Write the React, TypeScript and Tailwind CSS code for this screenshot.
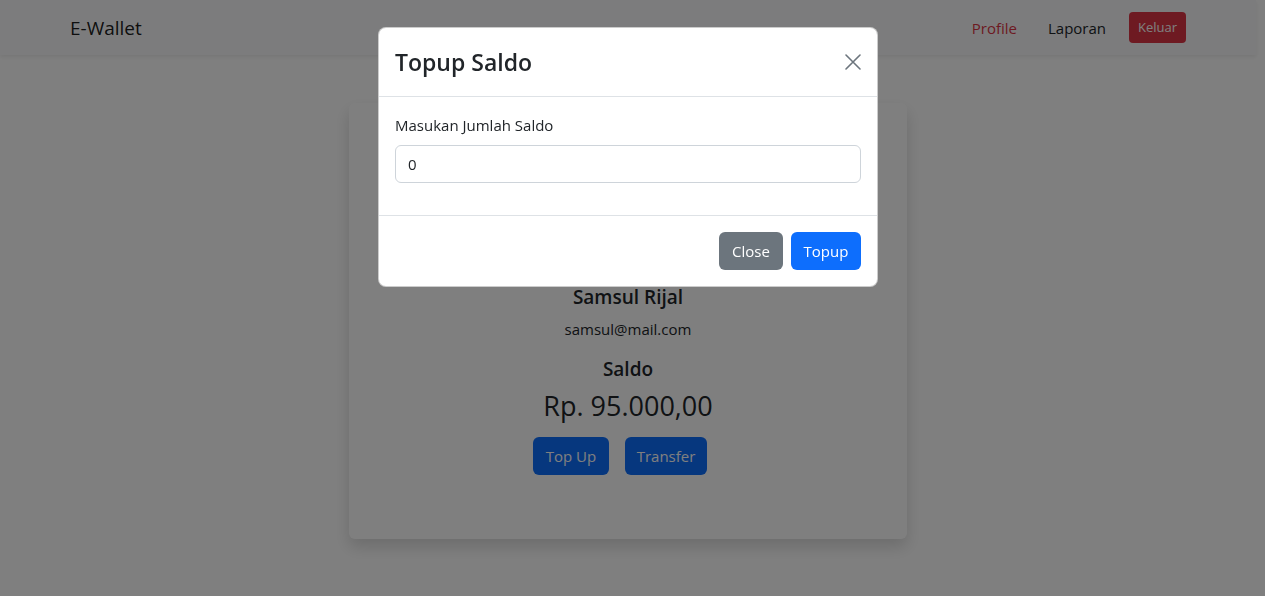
import React from "react";

export default function App() {
  return (
    <div className="relative min-h-[596px] bg-white font-['Open_Sans',sans-serif] text-[#212529]">
      <div className="pr-[9px]">
        <nav className="h-[55px] bg-[#f8f9fa] shadow-[0_2px_4px_rgba(0,0,0,0.075)]">
          <div className="mx-auto flex h-full max-w-[1140px] items-center justify-between px-3">
            <span className="text-[19px] leading-[30px] text-black/90">E-Wallet</span>
            <div className="flex items-center gap-[15px]">
              <a className="px-2 text-[15px] leading-6 text-[#dc3545]">Profile</a>
              <a className="px-2 text-[15px] leading-6 text-[#212529]">Laporan</a>
              <button className="h-[31px] w-[57px] rounded-[4px] bg-[#dc3545] text-[13px] text-white">Keluar</button>
            </div>
          </div>
        </nav>
        <main className="mx-auto max-w-[1140px] px-3">
          <div className="mx-auto mt-[48px] w-[558px] rounded-[6px] bg-white p-4 pb-[64px] text-center shadow-[0_8px_16px_rgba(0,0,0,0.15)]">
            <div className="h-[166px]" />
            <h5 className="mb-2 text-[19px] font-semibold leading-6">Samsul Rijal</h5>
            <p className="mb-4 text-[15px] leading-6">samsul@mail.com</p>
            <h5 className="mb-2 text-[19px] font-semibold leading-6">Saldo</h5>
            <h3 className="mb-[14px] text-[27px] font-medium leading-[34px]">Rp. 95.000,00</h3>
            <div className="flex justify-center gap-4 pr-4">
              <button className="h-[38px] w-[76px] rounded-[6px] bg-[#0d6efd] text-[15px] text-white">Top Up</button>
              <button className="h-[38px] w-[82px] rounded-[6px] bg-[#0d6efd] text-[15px] text-white">Transfer</button>
            </div>
          </div>
        </main>
      </div>

      <div className="fixed inset-0 bg-black/50" />

      <div className="fixed inset-0 flex justify-center pr-[9px]">
        <div className="mt-[27px] h-fit w-[500px] rounded-[8px] border border-black/20 bg-white">
          <div className="flex items-center justify-between border-b border-[#dee2e6] px-4 py-4">
            <h5 className="text-[23px] font-semibold leading-9">Topup Saldo</h5>
            <svg width="16" height="16" viewBox="0 0 16 16">
              <path d="M1 1L15 15M15 1L1 15" stroke="#6c757d" strokeWidth="1.6" strokeLinecap="round" />
            </svg>
          </div>
          <div className="px-4 pt-4 pb-8">
            <label className="mb-2 block text-[15px] leading-6">Masukan Jumlah Saldo</label>
            <div className="flex h-[38px] items-center rounded-[6px] border border-[#ced4da] px-3 text-[15px]">0</div>
          </div>
          <div className="flex justify-end gap-2 border-t border-[#dee2e6] px-4 py-4">
            <button className="h-[38px] w-[64px] rounded-[6px] bg-[#6c757d] text-[15px] text-white">Close</button>
            <button className="h-[38px] w-[70px] rounded-[6px] bg-[#0d6efd] text-[15px] text-white">Topup</button>
          </div>
        </div>
      </div>
    </div>
  );
}
